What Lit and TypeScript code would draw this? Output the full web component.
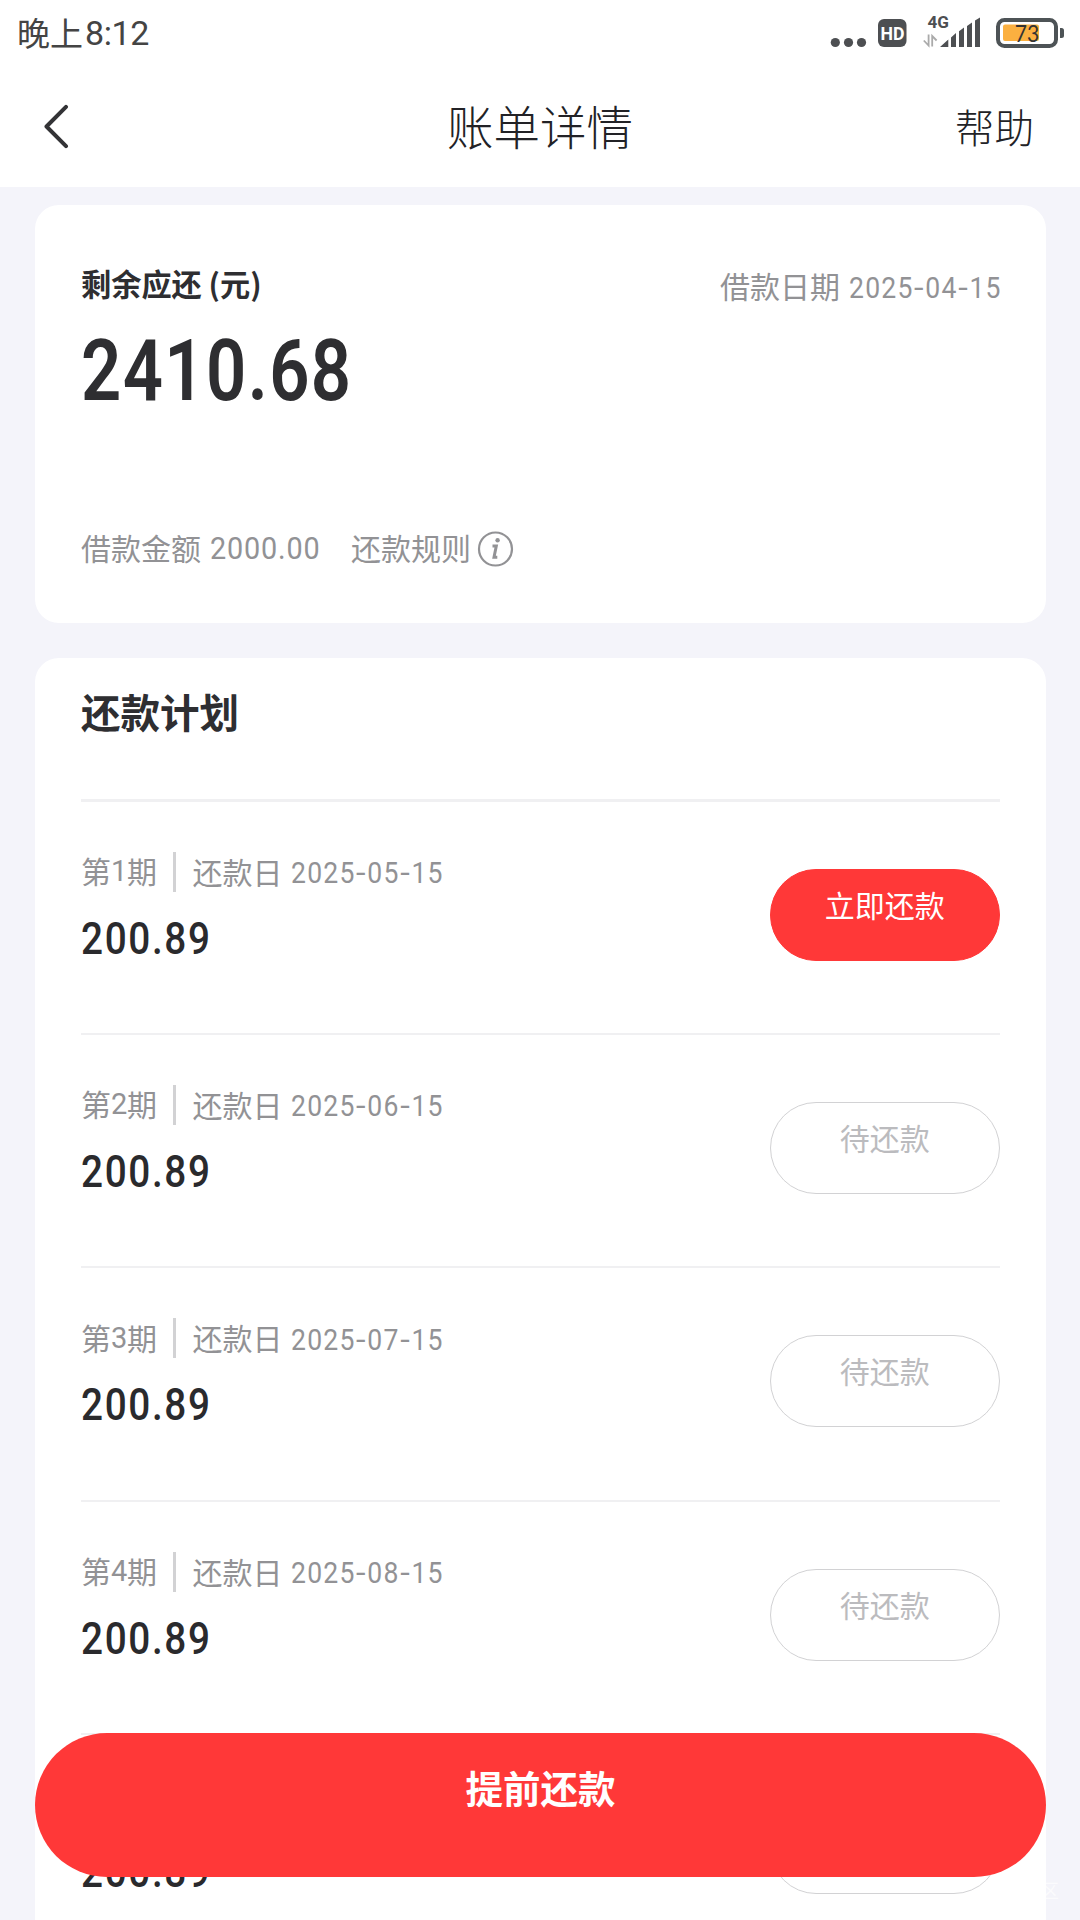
import { LitElement, html, css } from "lit";
import { customElement, property } from "lit/decorators.js";

const dashed = (date: string) =>
  date.split("-").map((part, i) => (i ? html`<span class="dash">-</span>${part}` : part));

@customElement("status-bar")
class StatusBar extends LitElement {
  static styles = css`
    :host { display: flex; justify-content: space-between; height: 66px; color: #444; }
    .time { display: flex; font-size: 33px; line-height: 65px; padding-left: 17px; }
    .clock { font-family: Roboto, "Liberation Sans", sans-serif; font-size: 34px; line-height: 67px; margin-left: 2px; letter-spacing: -0.4px; }
    .icons { display: block; width: 250px; height: 66px; }
    .dark { fill: #4d4f52; }
    .label { font-family: Roboto, "Liberation Sans", sans-serif; }
    .digits { font-family: Lato, Roboto, sans-serif; }
  `;
  render() {
    return html`
      <div class="time">晚上<span class="clock">8:12</span></div>
      <svg class="icons" viewBox="830 0 250 66">
        <g class="dark">
          <circle cx="835.3" cy="42.5" r="4.6" />
          <circle cx="848.5" cy="42.5" r="4.6" />
          <circle cx="861.5" cy="42.5" r="4.6" />
          <rect x="878" y="19" width="28.5" height="28" rx="6" />
        </g>
        <text class="label" x="880.5" y="40.3" font-size="19" font-weight="700" fill="#fff" textLength="24" lengthAdjust="spacingAndGlyphs">HD</text>
        <text class="label" x="927.5" y="28" font-size="16.5" font-weight="700" fill="#4d4f52" textLength="21.5" lengthAdjust="spacingAndGlyphs">4G</text>
        <g fill="none" stroke="#aaa" stroke-width="1.8">
          <path d="M928.6 34.5V45.5L923.8 40.5" />
          <path d="M932.2 46.5V36L936.6 40.5" />
        </g>
        <path class="dark" d="M940 47L948.3 39.5V47ZM951 47V37.5L956 33V47ZM959 47V31.3L964 27.5V47ZM967 47V26L972 22.5V47ZM975 47V20.5L980 17.5V47Z" />
        <rect x="998" y="20" width="58" height="26" rx="6.5" fill="#fff" stroke="#4d5356" stroke-width="4" />
        <rect x="1003" y="24.5" width="36" height="16.5" rx="2" fill="#fbb040" />
        <path d="M1060 28h1.5q2.5 0 2.5 2.5v5q0 2.5-2.5 2.5h-1.5z" fill="#4d5356" />
        <text class="digits" x="1014.8" y="41.8" font-size="22.5" fill="#333" textLength="24.5" lengthAdjust="spacingAndGlyphs">73</text>
      </svg>
    `;
  }
}

@customElement("nav-bar")
class NavBar extends LitElement {
  static styles = css`
    :host { display: grid; grid-template-columns: 300px 1fr 300px; height: 121px; color: #222226; font-weight: 300; }
    .back { width: 30px; height: 46px; margin: 38px 0 0 42px; }
    .title { font-size: 46.5px; line-height: 117px; text-align: center; }
    .help { font-size: 39.5px; line-height: 119px; text-align: right; padding-right: 46px; }
  `;
  render() {
    return html`
      <svg class="back" viewBox="42 104 30 46" fill="none" stroke="#333336" stroke-width="4" stroke-linecap="round" stroke-linejoin="round">
        <path d="M66 106.8L46.5 126.5L66 146.2" />
      </svg>
      <div class="title">账单详情</div>
      <div class="help">帮助</div>
    `;
  }
}

@customElement("summary-card")
class SummaryCard extends LitElement {
  static styles = css`
    :host { display: flex; flex-direction: column; height: 418px; padding: 56px 46px 0; background: #fff; border-radius: 24px; }
    .top { display: flex; justify-content: space-between; height: 48px; }
    .label { font-size: 30.2px; font-weight: 700; line-height: 44px; color: #2e2e31; }
    .date { display: flex; width: 280px; font-size: 30px; line-height: 49px; color: #929295; white-space: nowrap; }
    .num { display: block; font-family: Roboto, "Liberation Sans", sans-serif; transform: scaleX(0.9); transform-origin: left; white-space: nowrap; }
    .date .num { font-size: 29.5px; line-height: 54px; margin-left: 8.5px; letter-spacing: 1.4px; }
    .dash { display: inline-block; padding: 0 1.7px; transform: scaleX(1.3); }
    .total { font-family: Roboto, "Liberation Sans", sans-serif; font-size: 86px; font-weight: 600; line-height: 100px; margin-top: 11.5px; letter-spacing: 1.7px; color: #2e2e31; transform: scaleX(0.82); transform-origin: left; }
    .meta { display: flex; align-items: center; height: 50px; margin-top: 101.5px; font-size: 30px; color: #929295; }
    .amount { display: flex; width: 270px; align-items: center; }
    .amount .num { font-size: 32px; margin: 2px 0 0 9px; letter-spacing: 0.9px; }
    .info { width: 38px; height: 38px; margin: 4px 0 0 5px; }
  `;
  render() {
    return html`
      <div class="top">
        <div class="label">剩余应还 (元)</div>
        <div class="date"><span>借款日期</span><span class="num">${dashed("2025-04-15")}</span></div>
      </div>
      <div class="total">2410.68</div>
      <div class="meta">
        <div class="amount"><span>借款金额</span><span class="num">2000.00</span></div>
        <span>还款规则</span>
        <svg class="info" viewBox="0 0 38 38" fill="none" stroke="#929295" stroke-width="2.2">
          <circle cx="19.5" cy="19" r="16.5" />
          <circle cx="21.6" cy="10.3" r="2.2" fill="#929295" stroke="none" />
          <path d="M16.5 16H20.3L18 27.3H21.3" stroke-width="3" />
        </svg>
      </div>
    `;
  }
}

@customElement("plan-row")
class PlanRow extends LitElement {
  @property({ type: Number }) period = 1;
  @property() date = "";
  @property({ type: Boolean }) active = false;
  static styles = css`
    :host { display: flex; justify-content: space-between; box-sizing: border-box; height: 233.4px; border-top: 2px solid #f0f0f2; }
    .info { padding-top: 50px; }
    .line { display: flex; align-items: center; height: 40px; font-size: 30px; line-height: 40px; color: #929295; white-space: nowrap; }
    .num { display: block; font-family: Roboto, "Liberation Sans", sans-serif; font-size: 29.5px; letter-spacing: 1.4px; transform: scaleX(0.9); transform-origin: left; margin: 3px 0 0 8px; }
    .period { display: flex; width: 92px; }
    .index { width: 16px; font-family: Roboto, "Liberation Sans", sans-serif; font-size: 29px; line-height: 43px; text-align: center; }
    .bar { width: 3px; height: 40px; margin-right: 16.5px; background: #d2d2d4; }
    .day { line-height: 38px; margin-top: -2px; }
    .dash { display: inline-block; padding: 0 1.7px; transform: scaleX(1.3); }
    .amount { margin-top: 20px; font-family: Roboto, "Liberation Sans", sans-serif; font-size: 45px; line-height: 54px; font-weight: 500; letter-spacing: 1.9px; color: #2a2a2d; transform: scaleX(0.86); transform-origin: left; }
    .btn { box-sizing: border-box; width: 230.5px; height: 92px; margin-top: 67px; border: 1.5px solid #d2d2d4; border-radius: 46px; font-size: 30px; line-height: 69px; text-align: center; color: #bbbbbe; }
    .btn.active { background: #ff3838; border-color: #ff3838; color: #fff; }
  `;
  render() {
    return html`
      <div class="info">
        <div class="line">
          <span class="period">第<span class="index">${this.period}</span>期</span><span class="bar"></span><span class="day">还款日</span><span class="num">${dashed(this.date)}</span>
        </div>
        <div class="amount">200.89</div>
      </div>
      <div class="btn ${this.active ? "active" : ""}">${this.active ? "立即还款" : "待还款"}</div>
    `;
  }
}

@customElement("app-root")
class AppRoot extends LitElement {
  static styles = css`
    :host { display: block; position: relative; box-sizing: border-box; width: 1080px; height: 1920px; overflow: hidden; background: #f4f4fa; font-family: "Noto Sans CJK SC", sans-serif; }
    .head { height: 187px; background: #fff; }
    .cards { display: flex; flex-direction: column; gap: 35px; padding: 18px 34px 0 35px; }
    summary-card { box-sizing: border-box; }
    .plan { background: #fff; border-radius: 24px 24px 0 0; padding: 0 46px; height: 1300px; }
    .heading { height: 141.5px; box-sizing: border-box; padding-top: 24px; font-size: 39.5px; line-height: 58px; font-weight: 700; color: #2e2e31; border-bottom: 1px solid #f0f0f2; }
    .cta { position: absolute; left: 35px; top: 1733px; width: 1011px; height: 144px; border-radius: 72px; background: #ff3838; color: #fff; font-size: 37.5px; font-weight: 700; line-height: 108px; text-align: center; }
    .mark { position: absolute; left: 1040px; top: 1878px; font-size: 19px; line-height: 24px; color: #fff; opacity: 0.7; }
  `;
  dates = ["2025-05-15", "2025-06-15", "2025-07-15", "2025-08-15", "2025-09-15"];
  render() {
    return html`
      <div class="head"><status-bar></status-bar><nav-bar></nav-bar></div>
      <div class="cards">
        <summary-card></summary-card>
        <div class="plan">
          <div class="heading">还款计划</div>
          ${this.dates.map((d, i) => html`<plan-row .period=${i + 1} .date=${d} .active=${i === 0}></plan-row>`)}
        </div>
      </div>
      <div class="cta">提前还款</div>
      <div class="mark">区</div>
    `;
  }
}
